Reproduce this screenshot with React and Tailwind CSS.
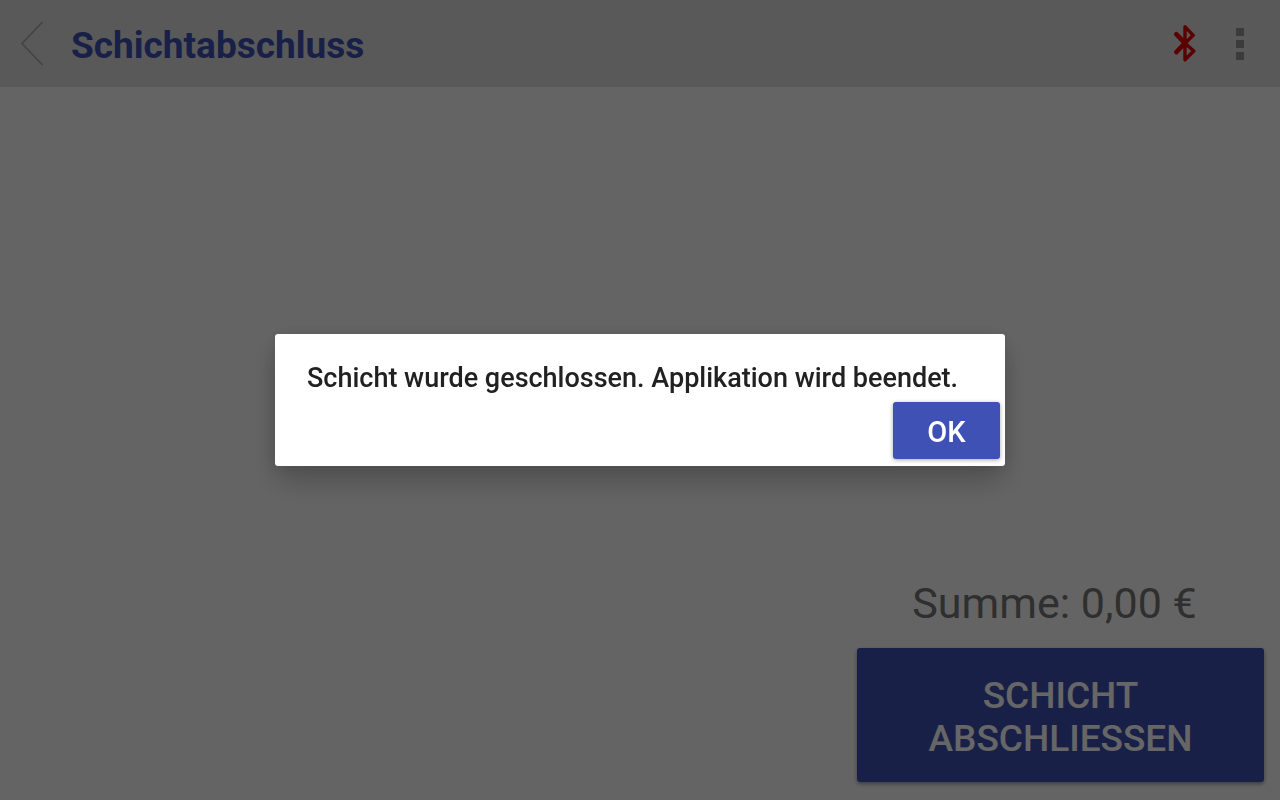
function BackIcon() {
  return (
    <svg width="24" height="46" viewBox="0 0 24 46" fill="none" stroke="#a6a6a6" strokeWidth="1.5" aria-hidden="true">
      <path d="M22.5 1 2 22.500l20.500 21.500" />
    </svg>
  );
}

function BluetoothIcon() {
  return (
    <svg width="24" height="38" viewBox="0 0 24 38" fill="none" stroke="#e00000" strokeLinecap="round" strokeLinejoin="round" aria-hidden="true">
      <path d="M13 18.200 21.800 26 13 34.800V1.700L21.200 10.300 13 18.200" strokeWidth="3.4" />
      <path d="M4.300 9.200 13 18.200 4.300 27.200" strokeWidth="4.6" />
      <circle cx="13.500" cy="18.200" r="2.200" />
    </svg>
  );
}

function MoreIcon() {
  return (
    <svg width="8" height="32" viewBox="0 0 8 32" fill="#949494" aria-hidden="true">
      <path d="M0 0h8v8H0zM0 12h8v8H0zM0 24h8v8H0z" />
    </svg>
  );
}

export default function App() {
  return (
    <div className="flex min-h-screen flex-col bg-[#fbfbfb] font-['Roboto',sans-serif]">
      <header className="flex h-[87px] items-center bg-[#dedede] pr-8 pl-5">
        <button type="button" aria-label="Zurück" className="shrink-0">
          <BackIcon />
        </button>
        <h1 className="ml-[27px] grow pt-1 text-[37px] leading-10 font-bold text-[#3f51b5]">Schichtabschluss</h1>
        <button type="button" aria-label="Bluetooth">
          <BluetoothIcon />
        </button>
        <button type="button" aria-label="Mehr" className="ml-9 flex w-4 justify-center">
          <MoreIcon />
        </button>
      </header>

      <main className="flex grow flex-col items-end justify-end px-4 pb-[18px]">
        <div className="flex w-[407px] flex-col">
          <p className="mb-5 pr-3 text-center text-[43px] leading-[50px] text-[#757575]">Summe: 0,00 €</p>
          <button
            type="button"
            className="rounded-[3px] bg-[#3f51b5] px-16 pt-[26px] pb-[22px] text-[37px] leading-[43px] font-medium text-white uppercase shadow-[0_2px_4px_rgba(0,0,0,0.4)]"
          >
            Schicht abschliessen
          </button>
        </div>
      </main>

      <div className="fixed inset-0 flex items-center justify-center bg-black/60">
        <div
          role="alertdialog"
          aria-modal="true"
          aria-labelledby="message"
          className="flex w-[730px] flex-col rounded-[3px] bg-white pt-7 pr-[5px] pb-[7px] pl-8 shadow-[0_16px_30px_rgba(0,0,0,0.22),0_0_20px_rgba(0,0,0,0.1)]"
        >
          <p id="message" className="mb-2 text-[27px] leading-8 font-medium text-[#212121]">
            Schicht wurde geschlossen. Applikation wird beendet.
          </p>
          <button
            type="button"
            className="h-[57px] w-[107px] self-end rounded-[3px] bg-[#3f51b5] pt-0.5 text-[29px] leading-8 font-medium text-white shadow-[0_1px_4px_rgba(0,0,0,0.35)]"
          >
            OK
          </button>
        </div>
      </div>
    </div>
  );
}
